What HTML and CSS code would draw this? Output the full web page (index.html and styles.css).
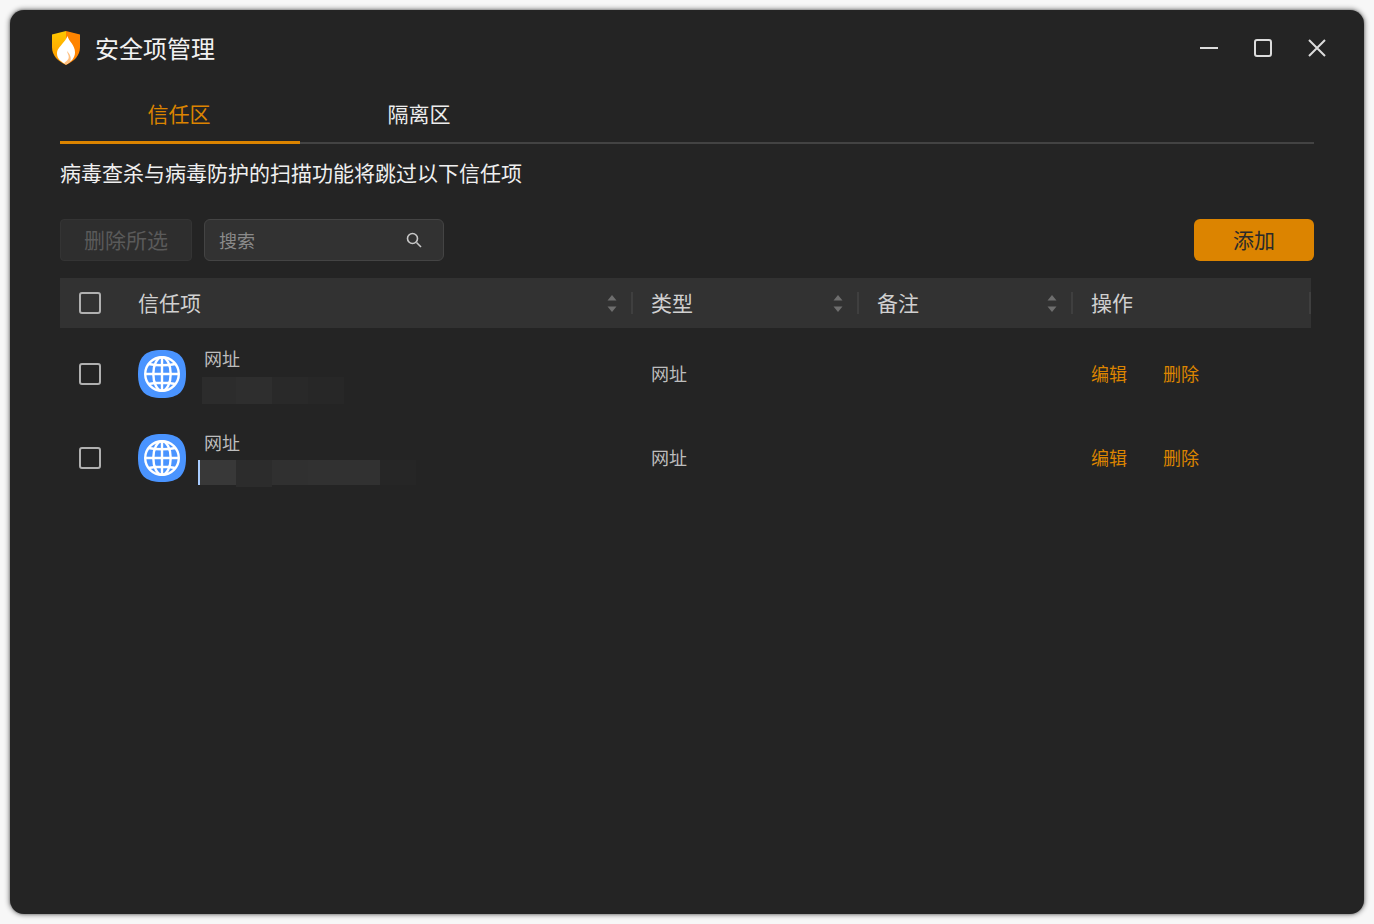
FILE: index.html
```html
<!DOCTYPE html>
<html lang="zh-CN">
<head>
<meta charset="utf-8">
<title>安全项管理</title>
<link rel="stylesheet" href="styles.css">
</head>
<body>
<main class="window">
  <header class="titlebar">
    <svg class="logo" width="28" height="34" viewBox="0 0 28 34">
      <defs><linearGradient id="lg" x1="0" y1="0" x2="0" y2="1"><stop offset="0" stop-color="#ffc800"/><stop offset="1" stop-color="#ff9500"/></linearGradient></defs>
      <path d="M0 3.500 14 0 14 34C6 30 0 25 0 16Z" fill="url(#lg)"/>
      <path d="M28 3.500 14 0 14 34C22 30 28 25 28 16Z" fill="#ff8400"/>
      <path d="M15.500 5C16.500 10 23 14 23 21.500 23 27 19 31 14 33.500 9.500 31 5 28 5 22.500 5 18 8 16 10.500 12.500 12.500 10 14.500 8 15.500 5Z" fill="#fff"/>
      <path d="M15 20C15.500 23 17.500 24.500 16.500 27.500 15.500 30 13 30.500 12 32.500L14 33.500 18 31C20 27 18 23 15 20Z" fill="#ffc080"/>
    </svg>
    <h1 class="title">安全项管理</h1>
    <div class="controls">
      <svg width="18" height="18" viewBox="0 0 18 18"><path d="M0 9H18" class="ctl"/></svg>
      <svg width="18" height="18" viewBox="0 0 18 18"><rect x="1" y="1" width="16" height="16" rx="2" class="ctl"/></svg>
      <svg width="18" height="18" viewBox="0 0 18 18"><path d="M1 1 17 17M17 1 1 17" class="ctl"/></svg>
    </div>
  </header>
  <div class="content">
    <nav class="tabs">
      <div class="tab active">信任区</div>
      <div class="tab">隔离区</div>
    </nav>
    <p class="desc">病毒查杀与病毒防护的扫描功能将跳过以下信任项</p>
    <div class="toolbar">
      <button class="btn-del">删除所选</button>
      <div class="search">
        <span>搜索</span>
        <svg width="16" height="16" viewBox="0 0 16 16"><circle cx="6.500" cy="6.500" r="5" class="sicon"/><path d="M10.500 10.500 15 15" class="sicon"/></svg>
      </div>
      <button class="btn-add">添加</button>
    </div>
    <div class="table">
      <div class="head">
        <div class="hcell first">
          <span class="check"></span><span class="hname">信任项</span>
          <svg class="sort" width="10" height="19" viewBox="0 0 10 19"><path d="M5 1 9.500 6.500H.5ZM5 18 9.500 12.500H.5Z"/></svg><i class="sep"></i>
        </div>
        <div class="hcell"><span class="hname">类型</span>
          <svg class="sort" width="10" height="19" viewBox="0 0 10 19"><path d="M5 1 9.500 6.500H.5ZM5 18 9.500 12.500H.5Z"/></svg><i class="sep"></i>
        </div>
        <div class="hcell"><span class="hname">备注</span>
          <svg class="sort" width="10" height="19" viewBox="0 0 10 19"><path d="M5 1 9.500 6.500H.5ZM5 18 9.500 12.500H.5Z"/></svg><i class="sep"></i>
        </div>
        <div class="hcell"><span class="hname">操作</span><i class="sep end"></i></div>
      </div>
      <div class="row">
        <div class="cell first">
          <span class="check"></span>
          <svg class="globe" width="48" height="48" viewBox="0 0 48 48">
            <path d="M24 0C41 0 48 7 48 24S41 48 24 48 0 41 0 24 7 0 24 0Z" fill="#4a94ff"/>
            <g class="gl"><circle cx="24" cy="24" r="16.800"/><ellipse cx="24" cy="24" rx="8.700" ry="16.800"/><path d="M24 7.200V40.800M7.200 24H40.800M10.500 14Q24 16.500 37.500 14M10.500 34Q24 31.500 37.500 34"/></g>
          </svg>
          <div class="item">
            <span class="iname">网址</span>
            <div class="redact r1"><i class="s1"></i><i class="s2"></i><i class="s3"></i><i class="s4"></i></div>
          </div>
        </div>
        <div class="cell type">网址</div>
        <div class="cell"></div>
        <div class="cell ops"><a>编辑</a><a>删除</a></div>
      </div>
      <div class="row">
        <div class="cell first">
          <span class="check"></span>
          <svg class="globe" width="48" height="48" viewBox="0 0 48 48">
            <path d="M24 0C41 0 48 7 48 24S41 48 24 48 0 41 0 24 7 0 24 0Z" fill="#4a94ff"/>
            <g class="gl"><circle cx="24" cy="24" r="16.800"/><ellipse cx="24" cy="24" rx="8.700" ry="16.800"/><path d="M24 7.200V40.800M7.200 24H40.800M10.500 14Q24 16.500 37.500 14M10.500 34Q24 31.500 37.500 34"/></g>
          </svg>
          <div class="item">
            <span class="iname">网址</span>
            <div class="redact r2"><i class="caret"></i><i class="s5"></i><i class="s6"></i><i class="s7"></i><i class="s8"></i><i class="s9"></i></div>
          </div>
        </div>
        <div class="cell type">网址</div>
        <div class="cell"></div>
        <div class="cell ops"><a>编辑</a><a>删除</a></div>
      </div>
    </div>
  </div>
</main>
</body>
</html>
```
FILE: styles.css
```css
* { box-sizing: border-box; }
html, body { margin: 0; height: 924px; overflow: hidden; }
body {
  background: #f7f7f7;
  padding: 10px;
  font-family: "Noto Sans CJK SC", "Noto Sans", sans-serif;
}
.window {
  height: 904px;
  background: #242424;
  border-radius: 14px;
  box-shadow: 0 0 2px #777, 0 0 5px 1px rgba(0,0,0,.45);
  display: flex;
  flex-direction: column;
}
.titlebar {
  height: 76px;
  display: flex;
  align-items: center;
  padding: 0 38px 0 42px;
  flex: none;
}
.logo { flex: none; }
.title {
  margin: 0 0 0 15px;
  font-size: 24px;
  font-weight: 400;
  color: #f2f2f2;
  line-height: 32px;
}
.controls { margin-left: auto; display: flex; gap: 36px; }
.ctl { fill: none; stroke: #dcdcdc; stroke-width: 2; }
.content { padding: 0 50px; flex: 1; }
.tabs {
  display: flex;
  height: 58px;
  border-bottom: 2px solid #434343;
}
.tab {
  width: 240px;
  height: 58px;
  padding-right: 2px;
  text-align: center;
  font-size: 21px;
  line-height: 54px;
  color: #ededed;
}
.tab.active {
  color: #dc8400;
  border-bottom: 3px solid #dc8400;
  margin-bottom: -2px;
}
.desc {
  margin: 12px 0 0;
  font-size: 21px;
  line-height: 32px;
  color: #efefef;
}
.toolbar {
  display: flex;
  align-items: stretch;
  height: 42px;
  gap: 12px;
  margin-top: 31px;
}
.btn-del {
  width: 132px;
  background: #2e2e2e;
  border: 1px solid #343434;
  border-radius: 4px;
  color: #5a5a5a;
  font: inherit;
  font-size: 21px;
  padding: 0 0 2px;
}
.search {
  width: 240px;
  background: #323232;
  border: 1px solid #444;
  border-radius: 6px;
  display: flex;
  align-items: center;
  justify-content: space-between;
  padding: 0 21px 0 14px;
  font-size: 18px;
  color: #8a8a8a;
}
.sicon { fill: none; stroke: #c8c8c8; stroke-width: 1.600; }
.btn-add {
  width: 120px;
  margin-left: auto;
  background: #dc8400;
  border: none;
  border-radius: 6px;
  color: #2a2a2a;
  font: inherit;
  font-size: 21px;
  padding: 0 0 2px;
}
.table { margin-top: 17px; width: 1251px; }
.head, .row {
  display: grid;
  grid-template-columns: 573px 226px 214px 238px;
}
.head { height: 50px; background: #323232; }
.hcell {
  display: flex;
  align-items: center;
  padding-left: 18px;
  padding-right: 15px;
  font-size: 21px;
  color: #d0d0d0;
}
.hcell.first { padding-left: 19px; }
.hname { flex: 1; padding-bottom: 2px; }
.first .hname { margin-left: 37px; }
.sort { fill: #6e6e6e; flex: none; }
.sep {
  flex: none;
  width: 2px;
  height: 22px;
  background: #3f3f3f;
  margin: 0 -15px 0 14px;
}
.sep.end { margin-right: -15px; margin-left: 0; }
.check {
  flex: none;
  width: 22px;
  height: 22px;
  border: 2px solid #b0b0b0;
  border-radius: 3px;
}
.row {
  height: 84px;
  align-items: center;
}
.head + .row { margin-top: 4px; }
.cell.first {
  display: flex;
  align-items: center;
  padding-left: 19px;
}
.globe { flex: none; margin-left: 37px; }
.gl { fill: none; stroke: #fff; stroke-width: 2.400; }
.item {
  margin-left: 12px;
  height: 54px;
  display: flex;
  flex-direction: column;
}
.iname {
  flex: none;
  margin: -1px 0 0 6px;
  font-size: 18px;
  line-height: 24px;
  color: #bdbdbd;
}
.redact { flex: none; display: flex; }
.redact i { display: block; width: 36px; height: 100%; }
.r1 { height: 27px; margin: 7px 0 0 4px; }
.r2 { height: 25px; margin-top: 6px; }
.s1 { background: #2c2c2c; width: 34px !important; }
.s2 { background: #2e2e2e; }
.s3 { background: #292929; }
.s4 { background: #272727; }
.caret { background: #a8ccff; width: 2px !important; }
.s5 { background: #383838; }
.s6 { background: #2c2c2c; height: 27px !important; }
.s7 { background: #303030; }
.s8 { background: #313131; width: 72px !important; }
.s9 { background: #262626; }
.type { padding: 0 0 2px 18px; font-size: 18px; color: #bdbdbd; }
.ops {
  padding: 0 0 2px 18px;
  display: flex;
  gap: 36px;
  font-size: 18px;
  color: #dc8400;
}
```
